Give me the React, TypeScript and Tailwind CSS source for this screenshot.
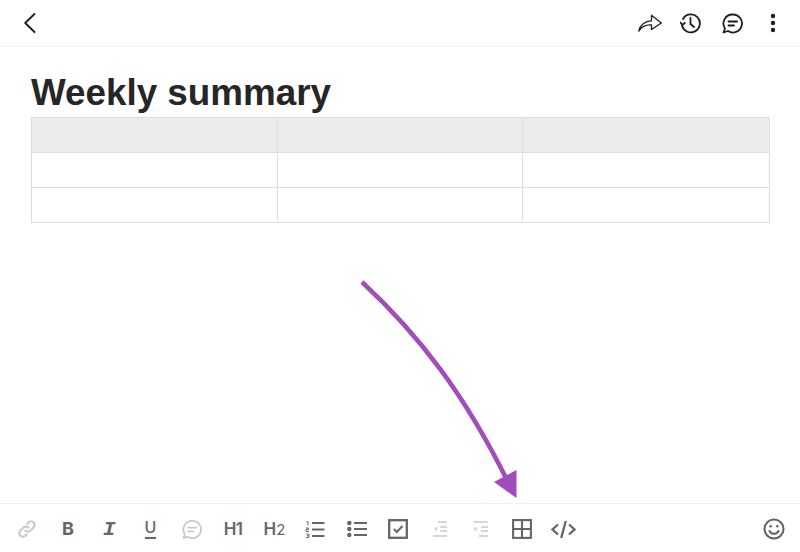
import React from 'react'

const GRAY = '#666666'
const LIGHT = '#c9c9c9'
const FAINT = '#d6d6d6'

function ToolSlot({ children }: { children: React.ReactNode }) {
  return <div className="w-[41.3px] h-[24px] flex items-center justify-center shrink-0">{children}</div>
}

function Header() {
  return (
    <div className="h-[47px] shrink-0 border-b border-[#f1f1f1] flex items-center justify-between pl-[24px] pr-[24px]">
      <svg width="12" height="20" viewBox="0 0 12 20" fill="none" stroke="#1c1c1c" strokeWidth="1.8" strokeLinecap="round" strokeLinejoin="round">
        <path d="M10.5 1 L1.2 10 L10.5 19" />
      </svg>
      <div className="flex items-center">
        <svg width="24" height="19" viewBox="0 0 24 19" fill="none" stroke="#1c1c1c" strokeWidth="1.3" strokeLinejoin="round">
          <path d="M0.8 17 C2 11 7 7 13.5 6.8 V1.2 L23.3 9 L13.5 15.5 V11 C8.5 10.5 4 12.5 0.8 17 Z" />
        </svg>
        <svg width="21" height="21" viewBox="0 0 21 21" fill="none" stroke="#1c1c1c" strokeWidth="1.8" strokeLinecap="round" strokeLinejoin="round" className="ml-[18px]">
          <path d="M3 6 A9 9 0 1 1 2 12" />
          <path d="M0.5 9.5 L2.3 12 L4.8 10" />
          <path d="M10.5 5 V11 L14 14" />
        </svg>
        <svg width="21" height="21" viewBox="0 0 21 21" fill="none" stroke="#1c1c1c" strokeWidth="1.8" strokeLinecap="round" strokeLinejoin="round" className="ml-[21px]">
          <path d="M10.8 1.5 A9 9 0 1 1 6 18 L1.5 19.5 L3 15.5 A9 9 0 0 1 10.8 1.5 Z" />
          <path d="M6.5 8.5 H15" />
          <path d="M6.5 12.5 H12" />
        </svg>
        <svg width="6" height="20" viewBox="0 0 6 20" fill="#1c1c1c" className="ml-[27px]">
          <circle cx="3" cy="3" r="2.2" />
          <circle cx="3" cy="10" r="2.2" />
          <circle cx="3" cy="17" r="2.2" />
        </svg>
      </div>
    </div>
  )
}

function DocTable() {
  const rows = [0, 1, 2]
  const widths = ['w-[246px]', 'w-[245px]', 'w-[247px]']
  return (
    <table className="w-[738px] table-fixed border-collapse">
      <tbody>
        {rows.map((r) => (
          <tr key={r} className="h-[35px]">
            {widths.map((w, c) => (
              <td key={c} className={`border border-[#dedede] p-0 ${w} ${r === 0 ? 'bg-[#ececec]' : 'bg-white'}`} />
            ))}
          </tr>
        ))}
      </tbody>
    </table>
  )
}

function Toolbar() {
  return (
    <div className="h-[49px] shrink-0 border-t border-[#f1f1f1] flex items-center pl-[6px] pr-[15px] pt-[2px]">
      <ToolSlot>
        <svg width="20" height="20" viewBox="0 0 20 20" fill="none" stroke={LIGHT} strokeWidth="2.1" strokeLinecap="round">
          <path d="M8.5 11.5 a3.6 3.6 0 0 0 5 0 l3.5 -3.5 a3.6 3.6 0 0 0 -5 -5 l-1.7 1.7" />
          <path d="M11.5 8.5 a3.6 3.6 0 0 0 -5 0 l-3.5 3.5 a3.6 3.6 0 0 0 5 5 l1.7 -1.7" />
        </svg>
      </ToolSlot>
      <ToolSlot>
        <span className="font-['Inter',sans-serif] font-bold text-[18px] leading-none text-[#666666]">B</span>
      </ToolSlot>
      <ToolSlot>
        <span className="font-['Liberation_Mono',monospace] font-bold italic text-[21px] leading-none text-[#666666]">I</span>
      </ToolSlot>
      <ToolSlot>
        <div className="flex flex-col items-center">
          <span className="font-['Inter',sans-serif] text-[16px] leading-[15px] font-medium text-[#666666]">U</span>
          <div className="w-[11px] h-[2px] mt-[2px] bg-[#666666]" />
        </div>
      </ToolSlot>
      <ToolSlot>
        <svg width="20" height="21" viewBox="0 0 21 21" fill="none" stroke={LIGHT} strokeWidth="1.9" strokeLinecap="round" strokeLinejoin="round">
          <path d="M10.8 1.5 A9 9 0 1 1 6 18 L1.5 19.5 L3 15.5 A9 9 0 0 1 10.8 1.5 Z" />
          <path d="M6.5 8.5 H15" />
          <path d="M6.5 12.5 H12" />
        </svg>
      </ToolSlot>
      <ToolSlot>
        <span className="font-['Inter',sans-serif] font-semibold text-[17px] tracking-[-0.5px] leading-none text-[#666666]">H1</span>
      </ToolSlot>
      <ToolSlot>
        <span className="font-['Inter',sans-serif] font-semibold text-[17px] leading-none text-[#666666]">H<span className="font-normal text-[15px]">2</span></span>
      </ToolSlot>
      <ToolSlot>
        <svg width="20" height="17" viewBox="0 0 20 17" fill="none" stroke={GRAY} strokeWidth="2" className="-ml-[1px]">
          <path d="M7 2 H19.5 M7 8.5 H19.5 M7 15 H19.5" />
          <path d="M1.5 1 L3 0.5 V4.5" strokeWidth="1" />
          <path d="M1 7 H3.5 V8.5 H1 V10.5 H3.8" strokeWidth="1" />
          <path d="M1 13 H3.8 V16.5 H1 M2 14.8 H3.8" strokeWidth="1" />
        </svg>
      </ToolSlot>
      <ToolSlot>
        <svg width="20" height="16" viewBox="0 0 20 16" fill={GRAY}>
          <circle cx="2.3" cy="2" r="2.2" />
          <circle cx="2.3" cy="8" r="2.2" />
          <circle cx="2.3" cy="14" r="2.2" />
          <path d="M7 1 H20 V3 H7 Z M7 7 H20 V9 H7 Z M7 13 H20 V15 H7 Z" />
        </svg>
      </ToolSlot>
      <ToolSlot>
        <svg width="20" height="20" viewBox="0 0 20 20" fill="none" stroke={GRAY}>
          <rect x="1.2" y="1.2" width="17.6" height="17.6" strokeWidth="2.3" />
          <path d="M5.8 10 L8.8 13 L14.5 7" strokeWidth="2" />
        </svg>
      </ToolSlot>
      <ToolSlot>
        <svg width="16" height="16" viewBox="0 0 16 16" fill="none" stroke={FAINT} strokeWidth="1.8">
          <path d="M6 1 H15 M8 6 H15 M8 10 H15 M1 15 H15" />
          <path d="M5 6 L2 8 L5 10 Z" fill={FAINT} strokeWidth="0.6" />
        </svg>
      </ToolSlot>
      <ToolSlot>
        <svg width="16" height="16" viewBox="0 0 16 16" fill="none" stroke={FAINT} strokeWidth="1.8">
          <path d="M1 1 H15 M8 6 H15 M8 10 H15 M6 15 H15" />
          <path d="M1.5 6 L4.5 8 L1.5 10 Z" fill={FAINT} strokeWidth="0.6" />
        </svg>
      </ToolSlot>
      <ToolSlot>
        <svg width="20" height="20" viewBox="0 0 20 20" fill="none" stroke={GRAY} strokeWidth="2.1">
          <rect x="1.1" y="1.1" width="17.8" height="17.8" />
          <path d="M10 1 V19 M1 10 H19" />
        </svg>
      </ToolSlot>
      <ToolSlot>
        <svg width="25" height="19" viewBox="0 0 25 19" fill="none" stroke={GRAY} strokeWidth="2.3">
          <path d="M7 4.5 L1.5 9.5 L7 14.5" />
          <path d="M18 4.5 L23.5 9.5 L18 14.5" />
          <path d="M14.8 1 L10.2 18" />
        </svg>
      </ToolSlot>
      <div className="ml-auto">
        <svg width="22" height="22" viewBox="0 0 22 22" fill="none" stroke={GRAY} strokeWidth="2.1" strokeLinecap="round">
          <circle cx="11" cy="11" r="9.5" />
          <path d="M6.5 13 a5 5 0 0 0 9 0" />
          <circle cx="7.7" cy="8.3" r="1.3" fill={GRAY} stroke="none" />
          <circle cx="14.3" cy="8.3" r="1.3" fill={GRAY} stroke="none" />
        </svg>
      </div>
    </div>
  )
}

export default function App() {
  return (
    <div className="relative w-[800px] h-[552px] bg-white flex flex-col overflow-hidden font-['Liberation_Sans',sans-serif]">
      <Header />
      <div className="flex-1 px-[31px] pt-[22px]">
        <h1 className="text-[36.8px] leading-[48px] font-bold text-[#262626]">Weekly summary</h1>
        <DocTable />
      </div>
      <Toolbar />
      {/* annotation arrow sits over the page */}
      <svg className="absolute left-0 top-0 pointer-events-none" width="800" height="552" viewBox="0 0 800 552" fill="none">
        <path d="M362 282 C 420 336, 465 395, 508 482" stroke="#a24dbb" strokeWidth="4.6" />
        <path d="M494 482 L516.5 470 L516.5 498 Z" fill="#a24dbb" />
      </svg>
    </div>
  )
}
